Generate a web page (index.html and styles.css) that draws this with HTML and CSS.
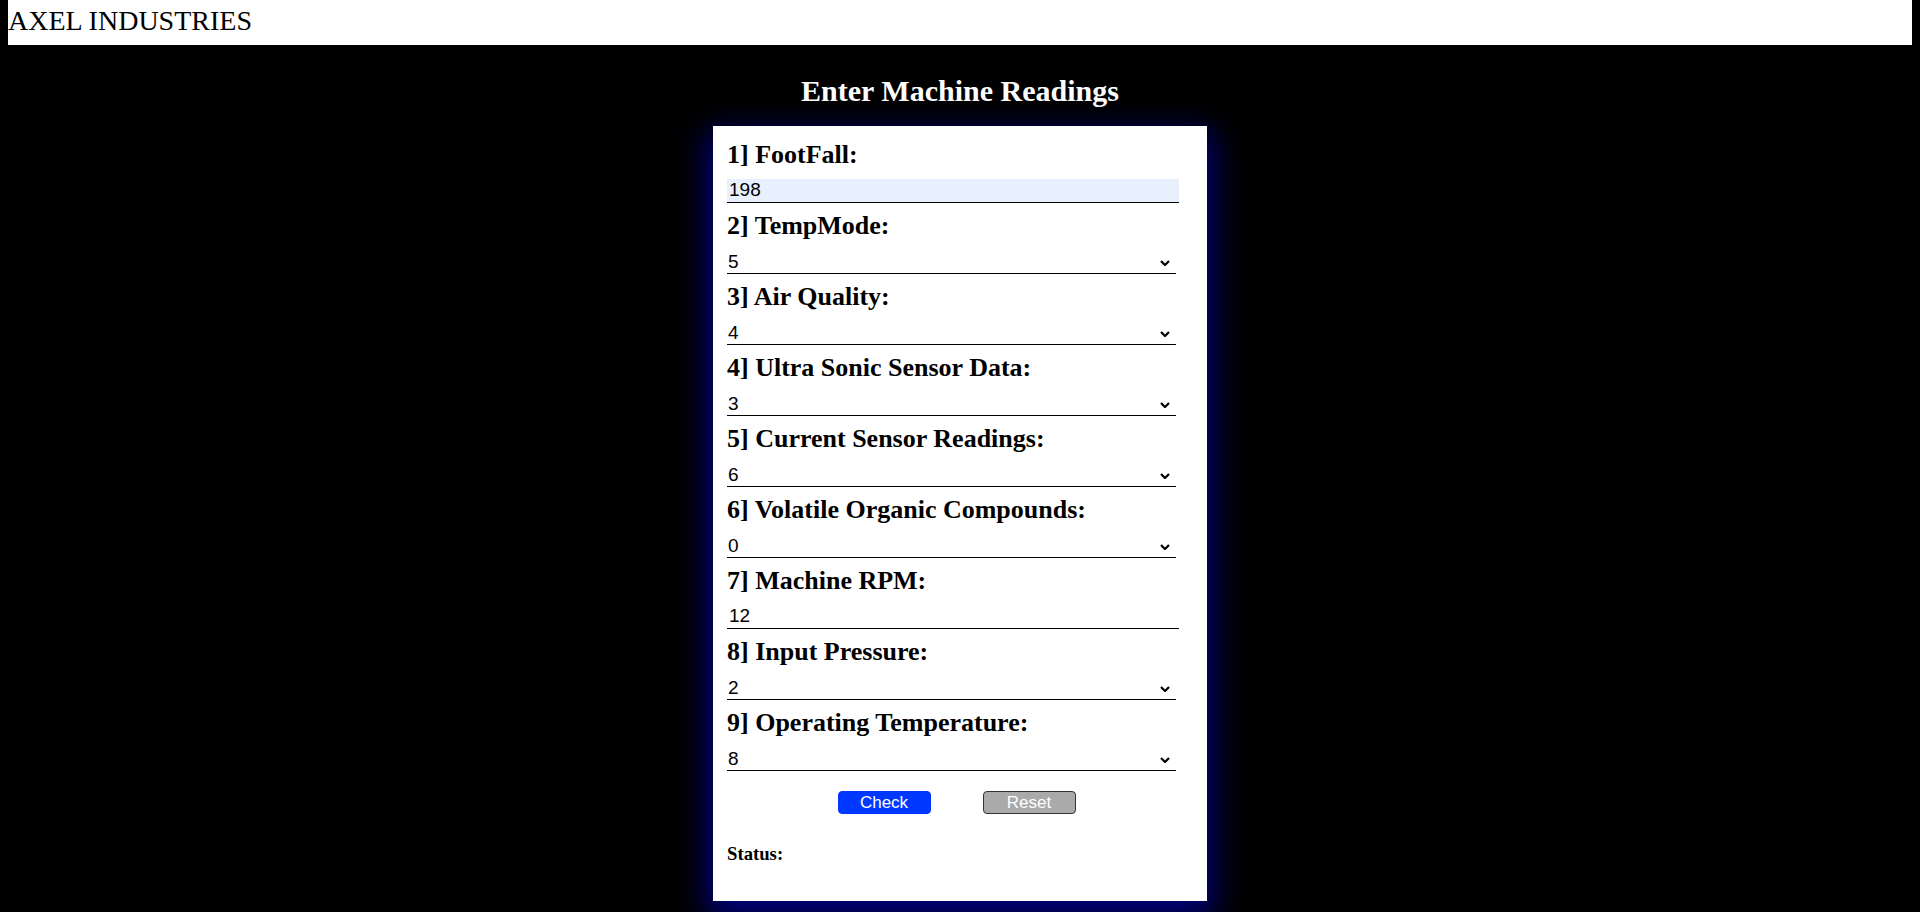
FILE: index.html
```html
<!DOCTYPE html>
<html lang="en">
<head>
<meta charset="utf-8">
<title>AXEL INDUSTRIES</title>
<link rel="stylesheet" href="styles.css">
</head>
<body>
<header class="topbar">AXEL INDUSTRIES</header>
<main class="page">
  <h1 class="title">Enter Machine Readings</h1>
  <form class="card">
    <div class="field">
      <label class="label">1] FootFall:</label>
      <input class="text-input autofill" type="text" value="198">
    </div>
    <div class="field">
      <label class="label">2] TempMode:</label>
      <div class="select-wrap">
        <select class="select"><option>5</option></select>
        <svg class="chev" viewBox="0 0 10 6" width="10" height="6"><path d="M1 1 L5 5 L9 1" fill="none" stroke="#000" stroke-width="2.2"/></svg>
      </div>
    </div>
    <div class="field">
      <label class="label">3] Air Quality:</label>
      <div class="select-wrap">
        <select class="select"><option>4</option></select>
        <svg class="chev" viewBox="0 0 10 6" width="10" height="6"><path d="M1 1 L5 5 L9 1" fill="none" stroke="#000" stroke-width="2.2"/></svg>
      </div>
    </div>
    <div class="field">
      <label class="label">4] Ultra Sonic Sensor Data:</label>
      <div class="select-wrap">
        <select class="select"><option>3</option></select>
        <svg class="chev" viewBox="0 0 10 6" width="10" height="6"><path d="M1 1 L5 5 L9 1" fill="none" stroke="#000" stroke-width="2.2"/></svg>
      </div>
    </div>
    <div class="field">
      <label class="label">5] Current Sensor Readings:</label>
      <div class="select-wrap">
        <select class="select"><option>6</option></select>
        <svg class="chev" viewBox="0 0 10 6" width="10" height="6"><path d="M1 1 L5 5 L9 1" fill="none" stroke="#000" stroke-width="2.2"/></svg>
      </div>
    </div>
    <div class="field">
      <label class="label">6] Volatile Organic Compounds:</label>
      <div class="select-wrap">
        <select class="select"><option>0</option></select>
        <svg class="chev" viewBox="0 0 10 6" width="10" height="6"><path d="M1 1 L5 5 L9 1" fill="none" stroke="#000" stroke-width="2.2"/></svg>
      </div>
    </div>
    <div class="field">
      <label class="label">7] Machine RPM:</label>
      <input class="text-input" type="text" value="12">
    </div>
    <div class="field">
      <label class="label">8] Input Pressure:</label>
      <div class="select-wrap">
        <select class="select"><option>2</option></select>
        <svg class="chev" viewBox="0 0 10 6" width="10" height="6"><path d="M1 1 L5 5 L9 1" fill="none" stroke="#000" stroke-width="2.2"/></svg>
      </div>
    </div>
    <div class="field">
      <label class="label">9] Operating Temperature:</label>
      <div class="select-wrap">
        <select class="select"><option>8</option></select>
        <svg class="chev" viewBox="0 0 10 6" width="10" height="6"><path d="M1 1 L5 5 L9 1" fill="none" stroke="#000" stroke-width="2.2"/></svg>
      </div>
    </div>
    <div class="actions">
      <button class="btn btn-check" type="button">Check</button>
      <button class="btn btn-reset" type="button">Reset</button>
    </div>
    <h3 class="status">Status:</h3>
  </form>
</main>
</body>
</html>
```
FILE: styles.css
```css
* {
  box-sizing: border-box;
}

html, body {
  height: 100%;
}

body {
  margin: 0 8px;
  background: #000;
  font-family: "Liberation Serif", "Times New Roman", serif;
  overflow: hidden;
}

.topbar {
  height: 45px;
  padding-top: 5px;
  background: #fff;
  color: #000;
  font-size: 28px;
  line-height: 32px;
}

.page {
  display: flex;
  flex-direction: column;
  align-items: center;
}

.title {
  margin: 29px 0 18px;
  color: #fff;
  font-size: 30px;
  line-height: 34px;
  font-weight: bold;
}

.card {
  width: 494px;
  background: #fff;
  padding: 14px 14px 36px;
  display: flex;
  flex-direction: column;
  gap: 8px;
  box-shadow: 0 12px 30px 6px #00007c;
}

.field {
  display: flex;
  flex-direction: column;
  gap: 9px;
}

.label {
  font-size: 26px;
  line-height: 30px;
  font-weight: bold;
  color: #000;
}

.text-input {
  width: 452px;
  height: 24px;
  border: none;
  border-bottom: 1px solid #000;
  padding: 0 2px 1px;
  font-family: "Liberation Sans", Arial, sans-serif;
  font-size: 19px;
  color: #000;
  background: #fff;
  outline: none;
}

.text-input.autofill {
  background: #e8f0fe;
}

.select-wrap {
  position: relative;
  width: 449px;
}

.select {
  appearance: none;
  -webkit-appearance: none;
  width: 449px;
  height: 24px;
  border: none;
  border-bottom: 1px solid #000;
  border-radius: 0;
  padding: 0 1px 1px;
  font-family: "Liberation Sans", Arial, sans-serif;
  font-size: 19px;
  color: #000;
  background: #fff;
  outline: none;
}

.chev {
  position: absolute;
  right: 6px;
  top: 10px;
  width: 10px;
  height: 6px;
  pointer-events: none;
}

.actions {
  margin-top: 12px;
  display: flex;
  justify-content: center;
  gap: 52px;
  padding-right: 7px;
}

.btn {
  width: 93px;
  height: 23px;
  padding: 0;
  border-radius: 4px;
  font-family: "Liberation Sans", Arial, sans-serif;
  font-size: 17px;
  color: #fff;
  cursor: pointer;
}

.btn-check {
  background: #0038ff;
  border: 1px solid #0038ff;
}

.btn-reset {
  background: #aaaaaa;
  border: 1px solid #333;
}

.status {
  margin: 21px 0 0;
  font-size: 18.72px;
  line-height: 22px;
  font-weight: bold;
  color: #000;
}
```
